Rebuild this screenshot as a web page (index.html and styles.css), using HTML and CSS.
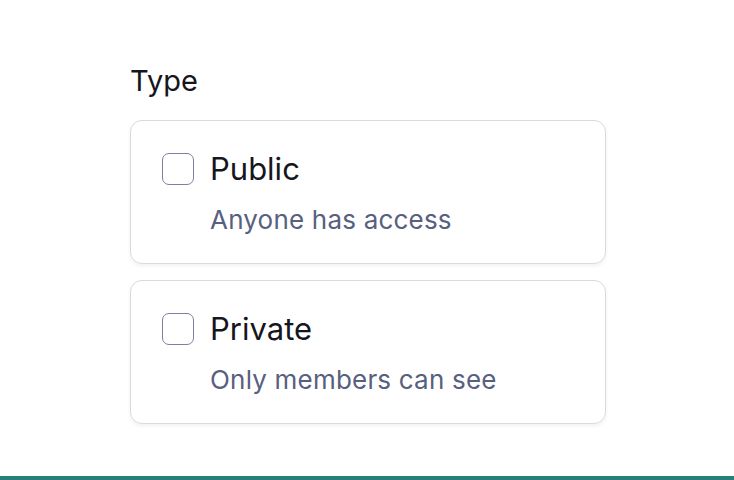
FILE: index.html
```html
<!DOCTYPE html>
<html lang="en">
<head>
    <meta charset="UTF-8">
    <title>Type</title>
    <link rel="stylesheet" href="styles.css">
</head>
<body>
    <div class="page">
        <div class="field">
            <div class="label">Type</div>
            <label class="option">
                <span class="option-head">
                    <span class="check"></span>
                    <span class="option-title">Public</span>
                </span>
                <span class="option-desc">Anyone has access</span>
            </label>
            <label class="option">
                <span class="option-head">
                    <span class="check"></span>
                    <span class="option-title">Private</span>
                </span>
                <span class="option-desc">Only members can see</span>
            </label>
        </div>
    </div>
    <div class="bottom-bar"></div>
</body>
</html>
```

FILE: styles.css
```css
* {
    padding: 0;
    margin: 0;
    box-sizing: border-box;
}

body {
    width: 734px;
    height: 480px;
    background: #fff;
    font-family: Inter, "Noto Sans", sans-serif;
    color: #16161d;
    display: flex;
    flex-direction: column;
    overflow: hidden;
}

.page {
    flex: 1;
    padding: 62px 0 0 130px;
}

.field {
    width: 476px;
    display: flex;
    flex-direction: column;
    gap: 16px;
}

.label {
    font-size: 29px;
    line-height: 38px;
    margin-bottom: 4px;
}

.option {
    display: flex;
    flex-direction: column;
    gap: 19px;
    height: 144px;
    padding: 31px 31px;
    border: 1px solid #d9d9e1;
    border-radius: 12px;
    box-shadow: 0 2px 4px rgba(20, 20, 40, 0.06);
}

.option-head {
    display: flex;
    align-items: center;
    gap: 16px;
}

.check {
    width: 32px;
    height: 32px;
    border: 1.5px solid #7b80a3;
    border-radius: 7px;
    background: #fff;
}

.option-title {
    font-size: 31px;
    line-height: 34px;
}

.option-desc {
    padding-left: 48px;
    font-size: 26px;
    line-height: 30px;
    letter-spacing: 0.2px;
    color: #58607f;
}

.bottom-bar {
    height: 4px;
    background: #26807a;
}
```
